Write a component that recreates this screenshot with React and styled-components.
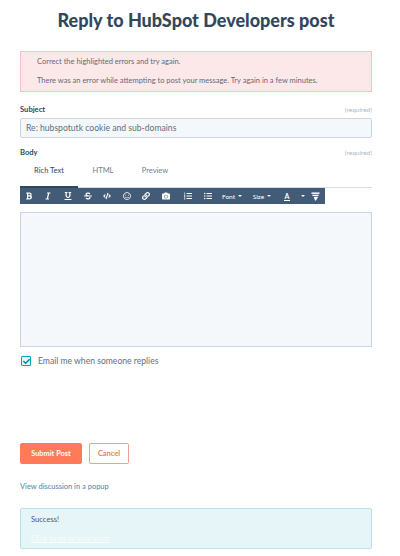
import styled, { createGlobalStyle } from 'styled-components';
import { FaBold, FaItalic, FaUnderline, FaStrikethrough, FaCode, FaRegSmile, FaLink, FaCamera, FaListOl, FaListUl, FaCheck } from 'react-icons/fa';

const GlobalStyle = createGlobalStyle`
  html, body { margin: 0; padding: 0; background: #fff; }
  body { font-family: Lato, "Liberation Sans", sans-serif; color: #33475b; }
`;

const Page = styled.div`
  width: 400px;
  height: 556px;
  overflow: hidden;
  box-sizing: border-box;
  padding: 10px 28px 0 20px;
`;

const Title = styled.h1`
  margin: 0 0 20px;
  font-size: 18px;
  line-height: 21px;
  font-weight: 900;
  text-align: center;
  color: #33475b;
`;

const ErrorBox = styled.div`
  box-sizing: border-box;
  height: 41px;
  padding: 5px 16px 0;
  background: #fde8e9;
  border: 1px solid #f2c4c6;
  font-size: 7.5px;
  line-height: 10px;
  color: #5f6a78;
  p { margin: 0 0 9px; }
`;

const FieldHead = styled.div`
  display: flex;
  justify-content: space-between;
  align-items: center;
  height: 12px;
  margin-top: ${p => p.$top}px;
`;

const Label = styled.span`
  font-size: 7.6px;
  font-weight: 700;
  color: #33475b;
`;

const Required = styled.span`
  font-size: 6.5px;
  color: #a8b8c8;
`;

const SubjectInput = styled.div`
  box-sizing: border-box;
  height: 20px;
  margin-top: 3px;
  padding: 0 5px;
  display: flex;
  align-items: center;
  background: #f5f8fa;
  border: 1px solid #cbd6e2;
  border-radius: 2px;
  font-size: 8.6px;
  color: #5d6f80;
`;

const Tabs = styled.div`
  display: flex;
  height: 27px;
  margin-top: 2px;
  border-bottom: 1px solid #d5dce3;
`;

const Tab = styled.div`
  box-sizing: border-box;
  width: ${p => p.$width}px;
  height: ${p => (p.$active ? '28px' : '27px')};
  padding-top: 6px;
  text-align: center;
  font-size: 7.5px;
  color: ${p => (p.$active ? '#33475b' : '#6d7f91')};
  border-bottom: ${p => (p.$active ? '2px solid #33475b' : 'none')};
`;

const Toolbar = styled.div`
  display: flex;
  align-items: center;
  width: 305px;
  height: 16px;
  background: #425b76;
  color: #fff;
`;

const ToolButton = styled.span`
  display: flex;
  justify-content: center;
  align-items: center;
  width: ${p => p.$width}px;
  font-size: 6.5px;
  svg { display: block; }
`;

const Caret = styled.span`
  width: 0;
  height: 0;
  margin-left: 3px;
  border-left: 2px solid transparent;
  border-right: 2px solid transparent;
  border-top: 2px solid #fff;
`;

const ColorLetter = styled.span`
  font-weight: 700;
  font-size: 7px;
  line-height: 8px;
  padding: 0 1px;
  border-bottom: 1px solid #fff;
`;

const BodyArea = styled.div`
  box-sizing: border-box;
  height: 135px;
  margin-top: 8px;
  background: #f5f8fa;
  border: 1px solid #cbd6e2;
`;

const CheckRow = styled.div`
  display: flex;
  align-items: center;
  gap: 7px;
  margin-top: 9px;
  margin-left: 1px;
  font-size: 8.6px;
  color: #5d6f80;
`;

const CheckBox = styled.span`
  box-sizing: border-box;
  display: flex;
  justify-content: center;
  align-items: center;
  width: 10px;
  height: 10px;
  background: #e5f5f8;
  border: 1px solid #00a4bd;
  border-radius: 1px;
  color: #00829b;
`;

const Actions = styled.div`
  display: flex;
  gap: 7px;
  margin-top: 77px;
`;

const Button = styled.button`
  box-sizing: border-box;
  height: 21px;
  width: ${p => p.$width}px;
  padding: 0;
  font-family: inherit;
  font-size: 7.4px;
  font-weight: 700;
  border-radius: 2px;
  border: 1px solid ${p => (p.$primary ? '#ff7a59' : '#f2a08c')};
  background: ${p => (p.$primary ? '#ff7a59' : '#fff')};
  color: ${p => (p.$primary ? '#fff' : '#ef7b60')};
`;

const PopupLink = styled.a`
  display: block;
  margin-top: 17px;
  font-size: 7.5px;
  line-height: 11px;
  color: #4f81a8;
`;

const SuccessBox = styled.div`
  box-sizing: border-box;
  height: 41px;
  margin-top: 16px;
  padding: 5px 10px 0;
  background: #e5f5f8;
  border: 1px solid #b9e2ea;
  border-radius: 2px;
  font-size: 7.6px;
  line-height: 10px;
  color: #4a5b6b;
  p { margin: 0 0 9px; }
  a { color: rgba(255, 255, 255, 0.75); text-decoration: underline; }
`;

const tools = [
  [FaBold, 18],
  [FaItalic, 20],
  [FaUnderline, 20],
  [FaStrikethrough, 20],
  [FaCode, 18],
  [FaRegSmile, 22],
  [FaLink, 16],
  [FaCamera, 24],
  [FaListOl, 20],
  [FaListUl, 20],
];

function ClearIcon() {
  return (
    <svg width="9" height="9" viewBox="0 0 10 10" fill="#fff">
      <rect x="0.5" y="0.5" width="9" height="1.6" />
      <rect x="1.5" y="3" width="7" height="1.4" />
      <path d="M3 5.2h5L5.6 9.4H4.4z" />
    </svg>
  );
}

export default function App() {
  return (
    <Page>
      <GlobalStyle />
      <Title>Reply to HubSpot Developers post</Title>
      <ErrorBox>
        <p>Correct the highlighted errors and try again.</p>
        <p>There was an error while attempting to post your message. Try again in a few minutes.</p>
      </ErrorBox>
      <FieldHead $top={11}>
        <Label>Subject</Label>
        <Required>(required)</Required>
      </FieldHead>
      <SubjectInput>Re: hubspotutk cookie and sub-domains</SubjectInput>
      <FieldHead $top={8}>
        <Label>Body</Label>
        <Required>(required)</Required>
      </FieldHead>
      <Tabs>
        <Tab $active $width={58}>Rich Text</Tab>
        <Tab $width={50}>HTML</Tab>
        <Tab $width={54}>Preview</Tab>
      </Tabs>
      <Toolbar>
        {tools.map(([Icon, width], i) => (
          <ToolButton key={i} $width={width}><Icon size={8} /></ToolButton>
        ))}
        <ToolButton $width={28}>Font<Caret /></ToolButton>
        <ToolButton $width={32}>Size<Caret /></ToolButton>
        <ToolButton $width={18}><ColorLetter>A</ColorLetter></ToolButton>
        <ToolButton $width={10}><Caret /></ToolButton>
        <ToolButton $width={18}><ClearIcon /></ToolButton>
      </Toolbar>
      <BodyArea />
      <CheckRow>
        <CheckBox><FaCheck size={7} /></CheckBox>
        Email me when someone replies
      </CheckRow>
      <Actions>
        <Button $primary $width={62}>Submit Post</Button>
        <Button $width={40}>Cancel</Button>
      </Actions>
      <PopupLink>View discussion in a popup</PopupLink>
      <SuccessBox>
        <p>Success!</p>
        <a>Click to go to your post</a>
      </SuccessBox>
    </Page>
  );
}
